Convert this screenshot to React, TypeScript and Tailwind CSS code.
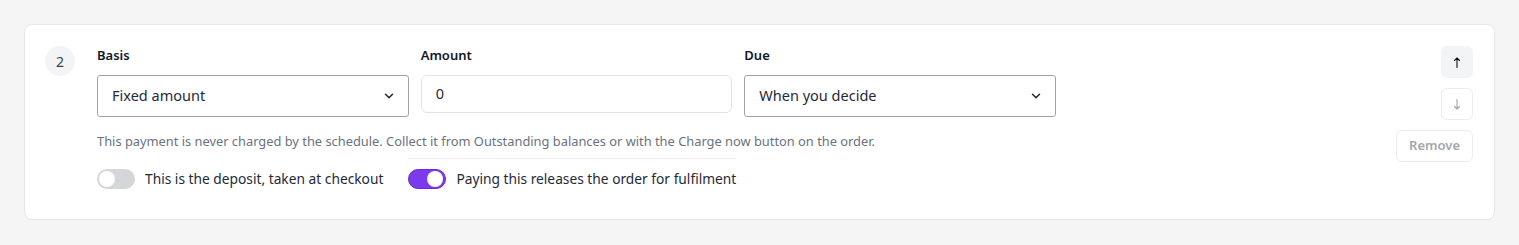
import React from "react";

function Chevron() {
  return (
    <svg width="14" height="14" viewBox="0 0 24 24" fill="none" stroke="#1f2937" strokeWidth="2.6" strokeLinecap="round" strokeLinejoin="round">
      <path d="M6 9l6 6 6-6" />
    </svg>
  );
}

function Arrow({ up, color }: { up: boolean; color: string }) {
  return (
    <svg width="8" height="11" viewBox="0 0 8 11" fill="none" stroke={color} strokeWidth="1.1" strokeLinecap="round" strokeLinejoin="round">
      {up ? <path d="M4 10.5V1M1.5 3.5L4 1l2.5 2.5" /> : <path d="M4 0.5V10M1.5 7.5L4 10l2.5-2.5" />}
    </svg>
  );
}

function Toggle({ on }: { on: boolean }) {
  return on ? (
    <div className="flex h-5 w-[38px] shrink-0 items-center justify-end rounded-full border border-[#6d28d9] bg-[#7c3aed] p-[2px]">
      <div className="h-4 w-4 rounded-full bg-white" />
    </div>
  ) : (
    <div className="flex h-5 w-[38px] shrink-0 items-center justify-start rounded-full bg-[#d4d6da] p-[1px]">
      <div className="h-[18px] w-[18px] rounded-full border border-[#d1d5db] bg-white" />
    </div>
  );
}

export default function App() {
  return (
    <div className="min-h-[245px] bg-[#f5f5f6] p-6 font-['Noto_Sans',sans-serif] text-[#1f2937]">
      <div className="flex rounded-lg border border-[#e7e7ea] bg-white p-5 pb-[30px]">
        <div className="mt-px flex h-[30px] w-[30px] shrink-0 items-center justify-center rounded-full bg-[#f3f4f6] text-[14px] text-[#374151]">
          2
        </div>
        <div className="ml-[22px] flex-1">
          <div className="grid w-[959px] grid-cols-3 gap-x-3">
            <div>
              <div className="mb-[10px] text-[13px] font-semibold leading-5 text-[#111827]">Basis</div>
              <div className="flex h-[42px] items-center justify-between rounded-[3px] border border-[#a3a3a3] pl-[14px] pr-3 text-[14.5px]">
                <span>Fixed amount</span>
                <Chevron />
              </div>
            </div>
            <div>
              <div className="mb-[10px] text-[13px] font-semibold leading-5 text-[#111827]">Amount</div>
              <div className="flex h-[38px] items-center rounded-md border border-[#e1e3e6] pl-[14px] text-[14.5px]">
                0
              </div>
            </div>
            <div>
              <div className="mb-[10px] text-[13px] font-semibold leading-5 text-[#111827]">Due</div>
              <div className="flex h-[42px] items-center justify-between rounded-[3px] border border-[#a3a3a3] pl-[14px] pr-3 text-[14.5px]">
                <span>When you decide</span>
                <Chevron />
              </div>
            </div>
          </div>
          <div className="mt-[14px] text-[12.85px] leading-5 text-[#6b7280]">
            This payment is never charged by the schedule. Collect it from Outstanding balances or with the Charge now button on the order.
          </div>
          <div className="mt-[7px] flex items-end gap-[25px]">
            <div className="flex items-center gap-[10px]">
              <Toggle on={false} />
              <span className="text-[13.75px] leading-5 text-[#1f2937]">This is the deposit, taken at checkout</span>
            </div>
            <div className="flex items-center gap-[10px] border-t border-[#f0f0f2] pt-[10px]">
              <Toggle on={true} />
              <span className="text-[13.75px] leading-5 text-[#1f2937]">Paying this releases the order for fulfilment</span>
            </div>
          </div>
        </div>
        <div className="mr-px flex flex-col items-end gap-[10px] pt-px">
          <button className="flex h-8 w-8 items-center justify-center rounded-md bg-[#f3f4f6]" aria-label="Move up">
            <Arrow up={true} color="#111111" />
          </button>
          <button className="flex h-8 w-8 items-center justify-center rounded-md border border-[#ececef] bg-white" aria-label="Move down">
            <Arrow up={false} color="#a3a6ab" />
          </button>
          <button className="h-8 rounded-md border border-[#ececef] bg-white px-3 text-[13px] font-semibold text-[#a3a6ab]">Remove</button>
        </div>
      </div>
    </div>
  );
}
